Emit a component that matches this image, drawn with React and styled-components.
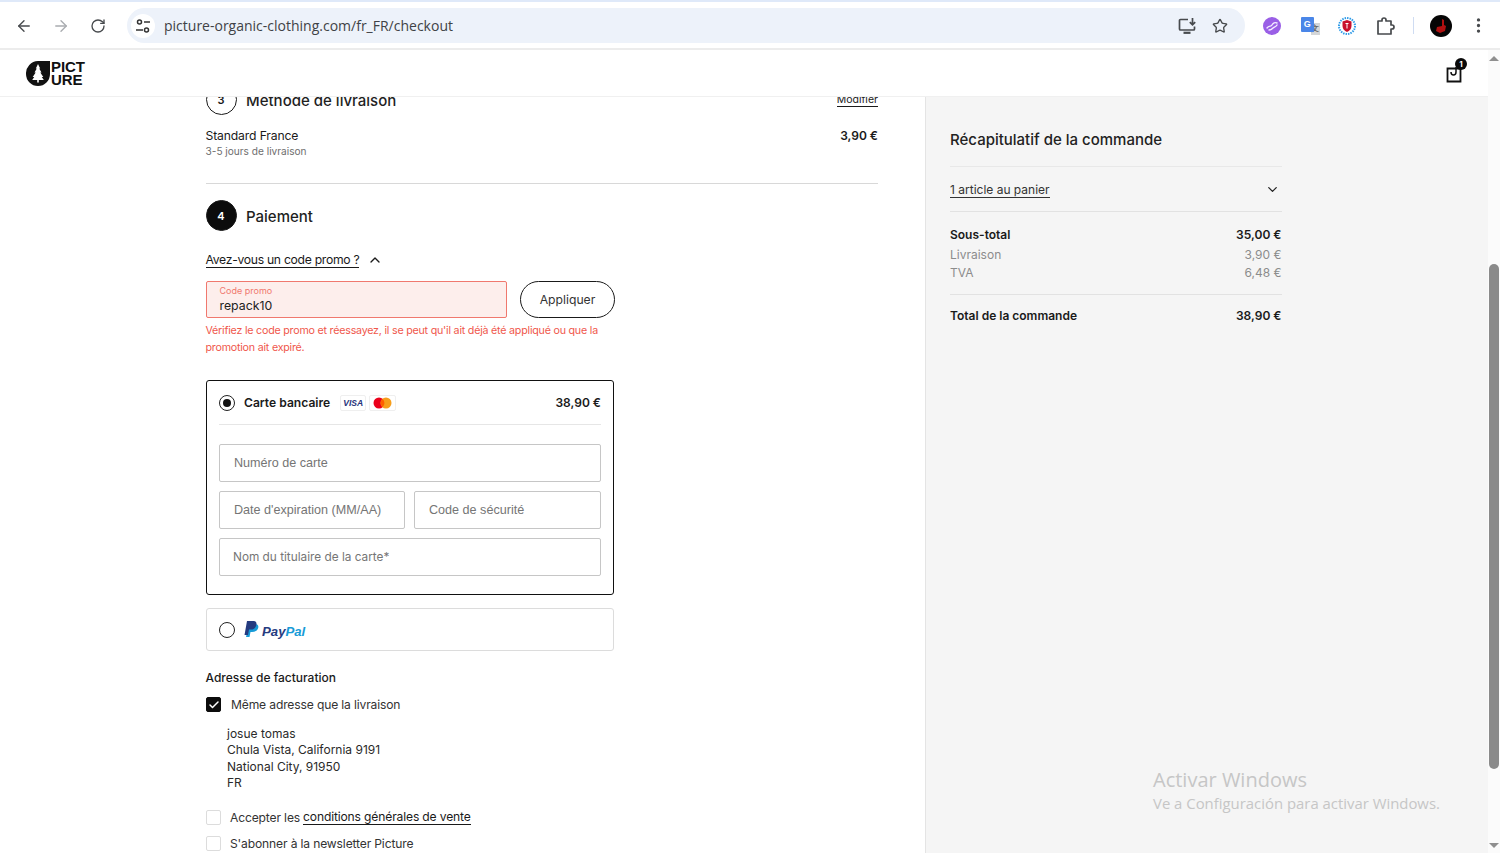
import React from 'react'
import styled, { createGlobalStyle } from 'styled-components'
import { ArrowLeft, ArrowRight, RotateCw, Star, MoreVertical, ChevronUp, ChevronDown, Check } from 'lucide-react'

const Global = createGlobalStyle`
  html, body { margin: 0; padding: 0; height: 100%; overflow: hidden; background: #fff; }
  * { box-sizing: border-box; }
  body { font-family: Inter, "Noto Sans", sans-serif; color: #1a1a1a; }
`

const Screen = styled.div`
  width: 1500px;
  height: 853px;
  position: relative;
  overflow: hidden;
  display: flex;
  flex-direction: column;
`
const BrowserBar = styled.div`
  height: 50px;
  flex: none;
  display: flex;
  align-items: center;
  padding: 1px 0 0 6px;
  background: #fff;
  border-top: 2px solid #dfe9f9;
  border-bottom: 2px solid #ececec;
`
const NavButton = styled.div`
  width: 36px;
  margin-right: 1px;
  display: flex;
  justify-content: center;
  color: ${p => (p.$muted ? '#a9acb0' : '#474a4d')};
`
const UrlPill = styled.div`
  width: 1118px;
  height: 35px;
  margin-left: 10px;
  border-radius: 18px;
  background: #edf2fa;
  display: flex;
  align-items: center;
  padding: 0 17px 0 4px;
`
const SiteButton = styled.div`
  width: 24px;
  height: 24px;
  border-radius: 50%;
  background: #fff;
  display: flex;
  align-items: center;
  justify-content: center;
`
const UrlText = styled.div`
  margin-left: 9px;
  flex: 1;
  font-family: "Open Sans", sans-serif;
  font-size: 14px;
  color: #3f4246;
`
const PillIcon = styled.div`
  margin-left: 15px;
  display: flex;
  color: #474a4d;
`
const ExtensionSlot = styled.div`
  width: 37.7px;
  height: 24px;
  display: flex;
  align-items: center;
  justify-content: center;
  color: #474a4d;
  position: relative;
`
const Extensions = styled.div`
  margin-left: 8px;
  display: flex;
  align-items: center;
`
const ToolbarDivider = styled.div`
  width: 1px;
  height: 17px;
  background: #cfdcf2;
  margin: 0 16px 0 9px;
`
const Avatar = styled.div`
  width: 22px;
  height: 22px;
  border-radius: 50%;
  background: #050505;
  display: flex;
  align-items: center;
  justify-content: center;
`
const MenuDots = styled.div`
  margin-left: 17px;
  display: flex;
  color: #474a4d;
`
const TranslateG = styled.span`
  width: 13px;
  height: 15px;
  background: #4a86e8;
  border-radius: 1px;
  color: #fff;
  font: 700 9px "Liberation Sans", sans-serif;
  display: flex;
  align-items: center;
  justify-content: center;
  position: absolute;
  left: 10px;
  top: 3px;
`
const TranslateX = styled.span`
  width: 9px;
  height: 12px;
  background: #d4d6d8;
  color: #666;
  font: 700 8px "Liberation Sans", sans-serif;
  display: flex;
  align-items: center;
  justify-content: center;
  position: absolute;
  left: 20px;
  top: 9px;
`

const Viewport = styled.div`
  flex: 1;
  min-height: 0;
  display: flex;
`
const Page = styled.div`
  flex: 1;
  min-width: 0;
  display: flex;
  flex-direction: column;
`
const SiteHeader = styled.header`
  height: 47px;
  flex: none;
  display: flex;
  align-items: center;
  justify-content: space-between;
  padding: 0 26px;
  position: relative;
  z-index: 1;
  background: #fff;
  border-bottom: 1px solid #f0f0f0;
`
const Logo = styled.div`
  display: flex;
  align-items: center;
  gap: 1px;
`
const LogoWord = styled.div`
  font-family: "Liberation Sans", sans-serif;
  font-weight: 700;
  font-size: 15px;
  line-height: 13px;
  letter-spacing: -0.1px;
  color: #111;
`
const CartButton = styled.div`
  position: relative;
  width: 16px;
  height: 17px;
  margin-top: 2px;
`
const CartBadge = styled.span`
  position: absolute;
  top: -8px;
  right: -5px;
  width: 12px;
  height: 12px;
  border-radius: 50%;
  background: #0a0a0a;
  color: #fff;
  font-size: 8px;
  font-weight: 700;
  line-height: 12px;
  text-align: center;
`
const Content = styled.div`
  flex: 1;
  min-height: 0;
  display: flex;
  overflow: hidden;
`
const Main = styled.main`
  width: 926px;
  flex: none;
  padding-left: 205.5px;
  border-right: 1px solid #e4e4e4;
`
const Column = styled.div`
  width: 672.5px;
  margin-top: -13px;
`
const StepHead = styled.div`
  height: 31px;
  margin-top: ${p => p.$top || 0}px;
  display: flex;
  align-items: center;
  gap: 9.5px;
  position: relative;
`
const StepNumber = styled.div`
  width: 31px;
  height: 31px;
  border-radius: 50%;
  display: flex;
  align-items: center;
  justify-content: center;
  font-size: 11px;
  font-weight: 600;
  border: 1px solid #1a1a1a;
  background: ${p => (p.$active ? '#0c0c0c' : '#fff')};
  color: ${p => (p.$active ? '#fff' : '#1a1a1a')};
`
const StepTitle = styled.div`
  padding-top: 2px;
  font-size: 15px;
  font-weight: 500;
  color: #1f1f1f;
`
const EditLink = styled.a`
  margin-left: auto;
  padding-top: 1px;
  font-size: 10.5px;
  color: #1a1a1a;
  border-bottom: 1px solid #1a1a1a;
  line-height: 13px;
`
const DeliveryRow = styled.div`
  margin-top: 13px;
  padding-bottom: 24px;
  border-bottom: 1px solid #d8d8d8;
  display: flex;
  justify-content: space-between;
`
const DeliveryName = styled.div`
  font-size: 12.2px;
  letter-spacing: -0.15px;
  line-height: 15px;
`
const DeliveryNote = styled.div`
  font-size: 10.1px;
  line-height: 16px;
  color: #6e6e6e;
`
const StrongPrice = styled.div`
  font-size: 12px;
  font-weight: 600;
  line-height: 16px;
`
const PromoToggle = styled.div`
  margin-top: 21px;
  display: flex;
  align-items: center;
  gap: 8px;
  color: #1a1a1a;
`
const PromoLabel = styled.span`
  font-size: 12.2px;
  letter-spacing: -0.3px;
  line-height: 15px;
  border-bottom: 1px solid #1a1a1a;
`
const PromoRow = styled.div`
  margin-top: 13px;
  margin-left: 0.5px;
  display: flex;
  gap: 13px;
`
const PromoField = styled.div`
  width: 301px;
  height: 37px;
  padding: 3px 12.500px 0;
  background: #fdeeec;
  border: 1px solid #f0786e;
  border-radius: 2px;
`
const PromoCaption = styled.div`
  font-size: 9px;
  line-height: 11px;
  color: #f0786e;
`
const PromoValue = styled.div`
  font-size: 12.3px;
  line-height: 20px;
  color: #222;
`
const ApplyButton = styled.button`
  width: 95px;
  height: 37px;
  border: 1px solid #1a1a1a;
  border-radius: 19px;
  background: #fff;
  font-family: Inter, sans-serif;
  font-size: 12.2px;
  color: #333;
  padding: 0;
`
const PromoError = styled.div`
  width: 408px;
  margin-top: 4px;
  font-size: 10.7px;
  letter-spacing: -0.22px;
  line-height: 17px;
  color: #f0574c;
`
const PayBox = styled.section`
  width: 408px;
  height: 215px;
  margin: 24px 0 0 0.5px;
  padding: 0 12px;
  border: 1.5px solid #111;
  border-radius: 3px;
`
const PayHead = styled.div`
  height: 44px;
  display: flex;
  align-items: center;
  border-bottom: 1px solid #e6e6e6;
`
const Radio = styled.span`
  width: 16px;
  height: 16px;
  flex: none;
  border-radius: 50%;
  border: 1.4px solid #222;
  display: flex;
  align-items: center;
  justify-content: center;
  &::after {
    content: '';
    width: 8px;
    height: 8px;
    border-radius: 50%;
    background: ${p => (p.$on ? '#111' : 'transparent')};
  }
`
const PayName = styled.span`
  margin-left: 9px;
  font-size: 12.1px;
  font-weight: 600;
`
const CardBadge = styled.span`
  width: ${p => p.$w}px;
  height: 16px;
  margin-left: ${p => p.$gap}px;
  border: 1px solid #efefef;
  border-radius: 2px;
  display: flex;
  align-items: center;
  justify-content: center;
`
const VisaText = styled.span`
  font: italic 700 8.5px "Liberation Sans", sans-serif;
  color: #26337a;
`
const PayPrice = styled(StrongPrice)`
  margin-left: auto;
`
const Fields = styled.div`
  margin-top: 19px;
  display: grid;
  grid-template-columns: 186px 187px;
  gap: 9.5px 9px;
`
const CardField = styled.div`
  grid-column: ${p => (p.$wide ? '1 / -1' : 'auto')};
  height: 37.5px;
  padding-left: ${p => (p.$plain ? 13 : 14)}px;
  border: 1.5px solid #c6c6c6;
  border-radius: 2px;
  display: flex;
  align-items: center;
  font-family: ${p => (p.$plain ? 'Inter, sans-serif' : '"Liberation Sans", sans-serif')};
  font-size: ${p => (p.$plain ? 11.8 : 12.6)}px;
  color: #757575;
`
const PayPalBox = styled.section`
  width: 408px;
  height: 43px;
  margin: 13px 0 0 0.5px;
  padding: 0 12px;
  border: 1px solid #dcdcdc;
  border-radius: 3px;
  display: flex;
  align-items: center;
`
const PayPalMark = styled.div`
  margin-left: 9px;
  display: flex;
  align-items: center;
  gap: 3px;
`
const PayPalWord = styled.span`
  font: italic 700 13.2px "Liberation Sans", sans-serif;
  color: ${p => p.$c};
`
const BillingTitle = styled.div`
  margin-top: 19px;
  font-size: 12px;
  font-weight: 500;
  line-height: 16px;
`
const CheckRow = styled.label`
  margin-top: ${p => p.$top}px;
  margin-left: 0.5px;
  height: 15px;
  display: flex;
  align-items: center;
  font-size: 12.1px;
  letter-spacing: -0.15px;
  color: #333;
`
const CheckBox = styled.span`
  width: 15px;
  height: 15px;
  flex: none;
  margin-right: ${p => p.$gap}px;
  border-radius: 2px;
  border: 1px solid ${p => (p.$on ? '#0c0c0c' : '#dcdcdc')};
  background: ${p => (p.$on ? '#0c0c0c' : '#fff')};
  display: flex;
  align-items: center;
  justify-content: center;
  color: #fff;
`
const Address = styled.address`
  margin: 14px 0 0 21.5px;
  font-style: normal;
  font-size: 12px;
  line-height: 16.4px;
  color: #2a2a2a;
`
const TermsLink = styled.a`
  margin-left: 3px;
  color: #1a1a1a;
  border-bottom: 1px solid #1a1a1a;
  line-height: 15px;
`

const Aside = styled.aside`
  flex: 1;
  background: #f5f5f5;
  padding: 33px 0 0 24px;
`
const Summary = styled.div`
  width: 331.5px;
`
const SummaryTitle = styled.h2`
  margin: 0;
  font-size: 15px;
  font-weight: 500;
  line-height: 20px;
  color: #222;
`
const BasketRow = styled.div`
  margin-top: 16px;
  height: 46px;
  border-top: 1px solid #e8e8e8;
  border-bottom: 1px solid #e2e2e2;
  display: flex;
  align-items: center;
  justify-content: space-between;
  padding-right: 2px;
  color: #222;
`
const BasketLabel = styled.span`
  margin-top: 2px;
  font-size: 12px;
  line-height: 15px;
  border-bottom: 1px solid #333;
  color: #333;
`
const Amounts = styled.div`
  padding: 14px 0 12px;
  border-bottom: 1px solid #e2e2e2;
`
const AmountRow = styled.div`
  display: flex;
  justify-content: space-between;
  font-size: 12px;
  line-height: 18px;
  font-weight: ${p => (p.$strong ? 600 : 400)};
  color: ${p => (p.$strong ? '#1a1a1a' : '#8c8c8c')};
  margin-bottom: ${p => p.$gap || 0}px;
`
const TotalRow = styled(AmountRow)`
  margin-top: 12px;
`

const Scrollbar = styled.div`
  width: 12px;
  flex: none;
  background: #fbfbfb;
  display: flex;
  flex-direction: column;
  align-items: center;
  justify-content: space-between;
  padding: 6px 0 5px;
`
const ScrollArrow = styled.span`
  width: 0;
  height: 0;
  border-left: 5px solid transparent;
  border-right: 5px solid transparent;
  border-${p => (p.$up ? 'bottom' : 'top')}: 5px solid #8f8f8f;
`
const ScrollThumb = styled.div`
  width: 10px;
  height: 505px;
  margin-top: 128px;
  border-radius: 5px;
  background: #8a8a8a;
`
const Watermark = styled.div`
  position: absolute;
  left: 1153px;
  top: 766px;
  font-family: "Open Sans", sans-serif;
  color: #c6c6c6;
  pointer-events: none;
`
const WatermarkTitle = styled.div`
  font-size: 20px;
  line-height: 28px;
`
const WatermarkText = styled.div`
  font-size: 14.9px;
  line-height: 19px;
`

function SiteControls() {
  return (
    <svg width="16" height="16" viewBox="0 0 16 16" fill="none" stroke="#333" strokeWidth="1.5">
      <circle cx="4.5" cy="4" r="2" />
      <path d="M9 4h6M1 12h7" />
      <circle cx="11.5" cy="12" r="2" />
    </svg>
  )
}

function InstallIcon() {
  return (
    <svg width="19" height="18" viewBox="0 0 19 18" fill="none" stroke="#474a4d" strokeWidth="1.7">
      <path d="M10 2.500H2.500a1 1 0 0 0-1 1V12a1 1 0 0 0 1 1h13a1 1 0 0 0 1-1V9.500" />
      <path d="M14.500 1v6.500M11.800 5.200l2.700 2.700 2.700-2.700" />
      <path d="M5.500 15.800h7" strokeWidth="2.200" />
    </svg>
  )
}

function PuzzleIcon() {
  return (
    <svg width="20" height="20" viewBox="0 0 20 20" fill="none" stroke="#474a4d" strokeWidth="1.7" strokeLinejoin="round">
      <path d="M3 5h4V4a2 2 0 0 1 4 0v1h5v4h1a2 2 0 0 1 0 4h-1v5H3z" />
    </svg>
  )
}

function LinkExtension() {
  return (
    <svg width="18" height="18" viewBox="0 0 18 18">
      <circle cx="9" cy="9" r="9" fill="#9a5fe6" />
      <path d="M4 11c2-3 4-1 5-3s3-3 5-2M6 13c2 0 3-1 4-2s3-1 4-3" fill="none" stroke="#f3ebff" strokeWidth="1.4" strokeLinecap="round" />
    </svg>
  )
}

function ShieldExtension() {
  return (
    <svg width="18" height="18" viewBox="0 0 18 18">
      <circle cx="9" cy="9" r="8" fill="none" stroke="#2f9be8" strokeWidth="2" strokeDasharray="1.5 1" />
      <path d="M4.5 4.5 9 3l4.500 1.500V9c0 3-2 5-4.500 6-2.500-1-4.500-3-4.500-6z" fill="#c8102e" />
      <path d="M7.500 6.500h3M9 6.500v5" stroke="#fff" strokeWidth="1" />
    </svg>
  )
}

function AvatarMark() {
  return (
    <svg width="14" height="16" viewBox="0 0 14 16">
      <path d="M8 1v7L3 9l-1 4 4 2 5-2 1-5-2-1V2z" fill="#b01010" />
    </svg>
  )
}

function LogoBadge() {
  return (
    <svg width="24" height="25" viewBox="0 0 24 25">
      <path d="M12 0h12v13a12 12 0 0 1-24 0A12.500 12.500 0 0 1 12 0z" fill="#111" />
      <path d="M12 3l2.200 4.500-1 0 2.300 4-1.200 0 3 4.500-1.500 0 2 3H12.800v2.500h-1.600V19H6.200l2-3H6.700l3-4.500H8.500l2.300-4-1 0z" fill="#fff" />
    </svg>
  )
}

function CartIcon() {
  return (
    <svg width="16" height="17" viewBox="0 0 16 17" fill="none" stroke="#111" strokeWidth="1.8">
      <path d="M1.500 2.500h13v13h-13z" />
      <path d="M10 1v5c0 4-5 4-5 0" strokeWidth="1.500" />
    </svg>
  )
}

function MastercardMark() {
  return (
    <svg width="19" height="12" viewBox="0 0 19 12">
      <circle cx="6" cy="6" r="5.500" fill="#eb001b" />
      <circle cx="13" cy="6" r="5.500" fill="#f79e1b" />
      <path d="M9.500 1.800a5.500 5.500 0 0 1 0 8.400 5.500 5.500 0 0 1 0-8.400z" fill="#ff5f00" />
    </svg>
  )
}

function PayPalIcon() {
  return (
    <svg width="15" height="17" viewBox="0 0 15 17">
      <path d="M5 3h6c3 0 4 2 3 4.500S10.500 11 8 11H6.500L5.500 16H2z" fill="#179bd7" />
      <path d="M3 0h6c3 0 4 1.700 3.300 4.200C11.600 7 9.500 8.500 7 8.500H5L4 14H.5z" fill="#253b80" />
    </svg>
  )
}

export default function App() {
  return (
    <>
      <Global />
      <Screen>
        <BrowserBar>
          <NavButton><ArrowLeft size={18} strokeWidth={1.8} /></NavButton>
          <NavButton $muted><ArrowRight size={18} strokeWidth={1.8} /></NavButton>
          <NavButton><RotateCw size={16} strokeWidth={2} /></NavButton>
          <UrlPill>
            <SiteButton><SiteControls /></SiteButton>
            <UrlText>picture-organic-clothing.com/fr_FR/checkout</UrlText>
            <PillIcon><InstallIcon /></PillIcon>
            <PillIcon><Star size={16} strokeWidth={2} /></PillIcon>
          </UrlPill>
          <Extensions>
            <ExtensionSlot><LinkExtension /></ExtensionSlot>
            <ExtensionSlot><TranslateX>文</TranslateX><TranslateG>G</TranslateG></ExtensionSlot>
            <ExtensionSlot><ShieldExtension /></ExtensionSlot>
            <ExtensionSlot><PuzzleIcon /></ExtensionSlot>
            <ToolbarDivider />
            <Avatar><AvatarMark /></Avatar>
            <MenuDots><MoreVertical size={19} strokeWidth={2.2} /></MenuDots>
          </Extensions>
        </BrowserBar>
        <Viewport>
          <Page>
            <SiteHeader>
              <Logo>
                <LogoBadge />
                <LogoWord>PICT<br />URE</LogoWord>
              </Logo>
              <CartButton>
                <CartIcon />
                <CartBadge>1</CartBadge>
              </CartButton>
            </SiteHeader>
            <Content>
              <Main>
                <Column>
                  <StepHead>
                    <StepNumber>3</StepNumber>
                    <StepTitle>Méthode de livraison</StepTitle>
                    <EditLink>Modifier</EditLink>
                  </StepHead>
                  <DeliveryRow>
                    <div>
                      <DeliveryName>Standard France</DeliveryName>
                      <DeliveryNote>3-5 jours de livraison</DeliveryNote>
                    </div>
                    <StrongPrice>3,90 €</StrongPrice>
                  </DeliveryRow>
                  <StepHead $top={16}>
                    <StepNumber $active>4</StepNumber>
                    <StepTitle>Paiement</StepTitle>
                  </StepHead>
                  <PromoToggle>
                    <PromoLabel>Avez-vous un code promo ?</PromoLabel>
                    <ChevronUp size={16} strokeWidth={2} />
                  </PromoToggle>
                  <PromoRow>
                    <PromoField>
                      <PromoCaption>Code promo</PromoCaption>
                      <PromoValue>repack10</PromoValue>
                    </PromoField>
                    <ApplyButton>Appliquer</ApplyButton>
                  </PromoRow>
                  <PromoError>Vérifiez le code promo et réessayez, il se peut qu'il ait déjà été appliqué ou que la promotion ait expiré.</PromoError>
                  <PayBox>
                    <PayHead>
                      <Radio $on />
                      <PayName>Carte bancaire</PayName>
                      <CardBadge $w={26} $gap={10}><VisaText>VISA</VisaText></CardBadge>
                      <CardBadge $w={27} $gap={3}><MastercardMark /></CardBadge>
                      <PayPrice>38,90 €</PayPrice>
                    </PayHead>
                    <Fields>
                      <CardField $wide>Numéro de carte</CardField>
                      <CardField>Date d'expiration (MM/AA)</CardField>
                      <CardField>Code de sécurité</CardField>
                      <CardField $wide $plain>Nom du titulaire de la carte*</CardField>
                    </Fields>
                  </PayBox>
                  <PayPalBox>
                    <Radio />
                    <PayPalMark>
                      <PayPalIcon />
                      <span>
                        <PayPalWord $c="#253b80">Pay</PayPalWord>
                        <PayPalWord $c="#179bd7">Pal</PayPalWord>
                      </span>
                    </PayPalMark>
                  </PayPalBox>
                  <BillingTitle>Adresse de facturation</BillingTitle>
                  <CheckRow $top={11}>
                    <CheckBox $on $gap={10}><Check size={12} strokeWidth={3} /></CheckBox>
                    Même adresse que la livraison
                  </CheckRow>
                  <Address>
                    josue tomas<br />
                    Chula Vista, California 9191<br />
                    National City, 91950<br />
                    FR
                  </Address>
                  <CheckRow $top={18}>
                    <CheckBox $gap={9} />
                    Accepter les <TermsLink>conditions générales de vente</TermsLink>
                  </CheckRow>
                  <CheckRow $top={11}>
                    <CheckBox $gap={9} />
                    S'abonner à la newsletter Picture
                  </CheckRow>
                </Column>
              </Main>
              <Aside>
                <Summary>
                  <SummaryTitle>Récapitulatif de la commande</SummaryTitle>
                  <BasketRow>
                    <BasketLabel>1 article au panier</BasketLabel>
                    <ChevronDown size={15} strokeWidth={2} />
                  </BasketRow>
                  <Amounts>
                    <AmountRow $strong $gap={2}><span>Sous-total</span><span>35,00 €</span></AmountRow>
                    <AmountRow><span>Livraison</span><span>3,90 €</span></AmountRow>
                    <AmountRow><span>TVA</span><span>6,48 €</span></AmountRow>
                  </Amounts>
                  <TotalRow $strong><span>Total de la commande</span><span>38,90 €</span></TotalRow>
                </Summary>
              </Aside>
            </Content>
          </Page>
          <Scrollbar>
            <ScrollArrow $up />
            <ScrollThumb />
            <ScrollArrow />
          </Scrollbar>
        </Viewport>
        <Watermark>
          <WatermarkTitle>Activar Windows</WatermarkTitle>
          <WatermarkText>Ve a Configuración para activar Windows.</WatermarkText>
        </Watermark>
      </Screen>
    </>
  )
}
